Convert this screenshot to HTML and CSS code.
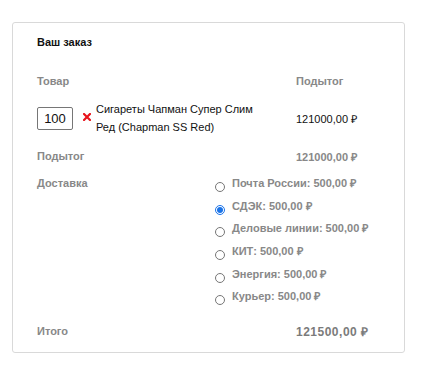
FILE: index.html
```html
<!DOCTYPE html>
<html lang="ru">

<head>
    <meta charset="UTF-8">
    <meta name="viewport" content="width=device-width, initial-scale=1.0">
    <title>Ваш заказ</title>
    <link rel="stylesheet" href="styles.css">
</head>

<body>
<div class="order">
    <div class="order-title">Ваш заказ</div>

    <div class="row head">
        <div class="col1">Товар</div>
        <div class="col2">Подытог</div>
    </div>

    <div class="row item">
        <div class="col1 item-main">
            <input class="qty" type="text" value="100">
            <span class="remove">
                <svg width="8" height="8" viewBox="0 0 8 8">
                    <path d="M1 1 L7 7 M7 1 L1 7" stroke="#e8141b" stroke-width="2.2" stroke-linecap="square"/>
                </svg>
            </span>
            <span class="item-name">Сигареты Чапман Супер Слим Ред (Chapman SS Red)</span>
        </div>
        <div class="col2 price">121000,00 ₽</div>
    </div>

    <div class="row sub">
        <div class="col1">Подытог</div>
        <div class="col2">121000,00 ₽</div>
    </div>

    <div class="ship">
        <div class="ship-label">Доставка</div>
        <ul class="ship-list">
            <li><input type="radio" name="ship"><label>Почта России: 500,00 ₽</label></li>
            <li><input type="radio" name="ship" checked><label>СДЭК: 500,00 ₽</label></li>
            <li><input type="radio" name="ship"><label>Деловые линии: 500,00 ₽</label></li>
            <li><input type="radio" name="ship"><label>КИТ: 500,00 ₽</label></li>
            <li><input type="radio" name="ship"><label>Энергия: 500,00 ₽</label></li>
            <li><input type="radio" name="ship"><label>Курьер: 500,00 ₽</label></li>
        </ul>
    </div>

    <div class="row total">
        <div class="col1">Итого</div>
        <div class="col2 total-sum">121500,00 ₽</div>
    </div>
</div>
</body>

</html>
```

FILE: styles.css
```css
body {
    margin: 0;
    background: #fff;
    font-family: "Liberation Sans", Arial, sans-serif;
    font-size: 11px;
}

.order {
    box-sizing: border-box;
    margin: 22px 0 0 12px;
    width: 393px;
    height: 331px;
    border: 1px solid #d9d9d9;
    border-radius: 3px;
    padding: 0 24px;
}

.order-title {
    height: 38px;
    display: flex;
    align-items: center;
    font-weight: bold;
    color: #111;
}

.row {
    display: flex;
    align-items: center;
    color: #888;
    font-weight: bold;
}

.col1 {
    width: 259px;
}

.head {
    height: 39px;
}

.item {
    height: 36px;
    color: #111;
    font-weight: normal;
}

.item-main {
    display: flex;
    align-items: center;
}

.qty {
    box-sizing: border-box;
    width: 36px;
    height: 23px;
    margin: 0;
    padding: 0;
    border: 1px solid #767676;
    border-radius: 2px;
    text-align: center;
    font-family: "Liberation Sans", Arial, sans-serif;
    font-size: 13px;
    color: #111;
}

.remove {
    display: flex;
    margin: -2px 5px 0 10px;
}

.item-name {
    width: 172px;
    line-height: 18px;
}

.sub {
    height: 40px;
}

.ship {
    display: flex;
    color: #888;
    font-weight: bold;
    line-height: 15px;
}

.ship-label {
    width: 178px;
}

.ship-list {
    list-style: none;
    margin: 0;
    padding: 0;
}

.ship-list li {
    display: flex;
    align-items: flex-start;
    height: 22.7px;
}

.ship-list input {
    width: 10px;
    height: 10px;
    margin: 6px 7px 0 0;
    accent-color: #1a73e8;
}

.total {
    height: 38px;
}

.total-sum {
    font-size: 12px;
    letter-spacing: 0.5px;
    color: #7b7b7b;
}
```
